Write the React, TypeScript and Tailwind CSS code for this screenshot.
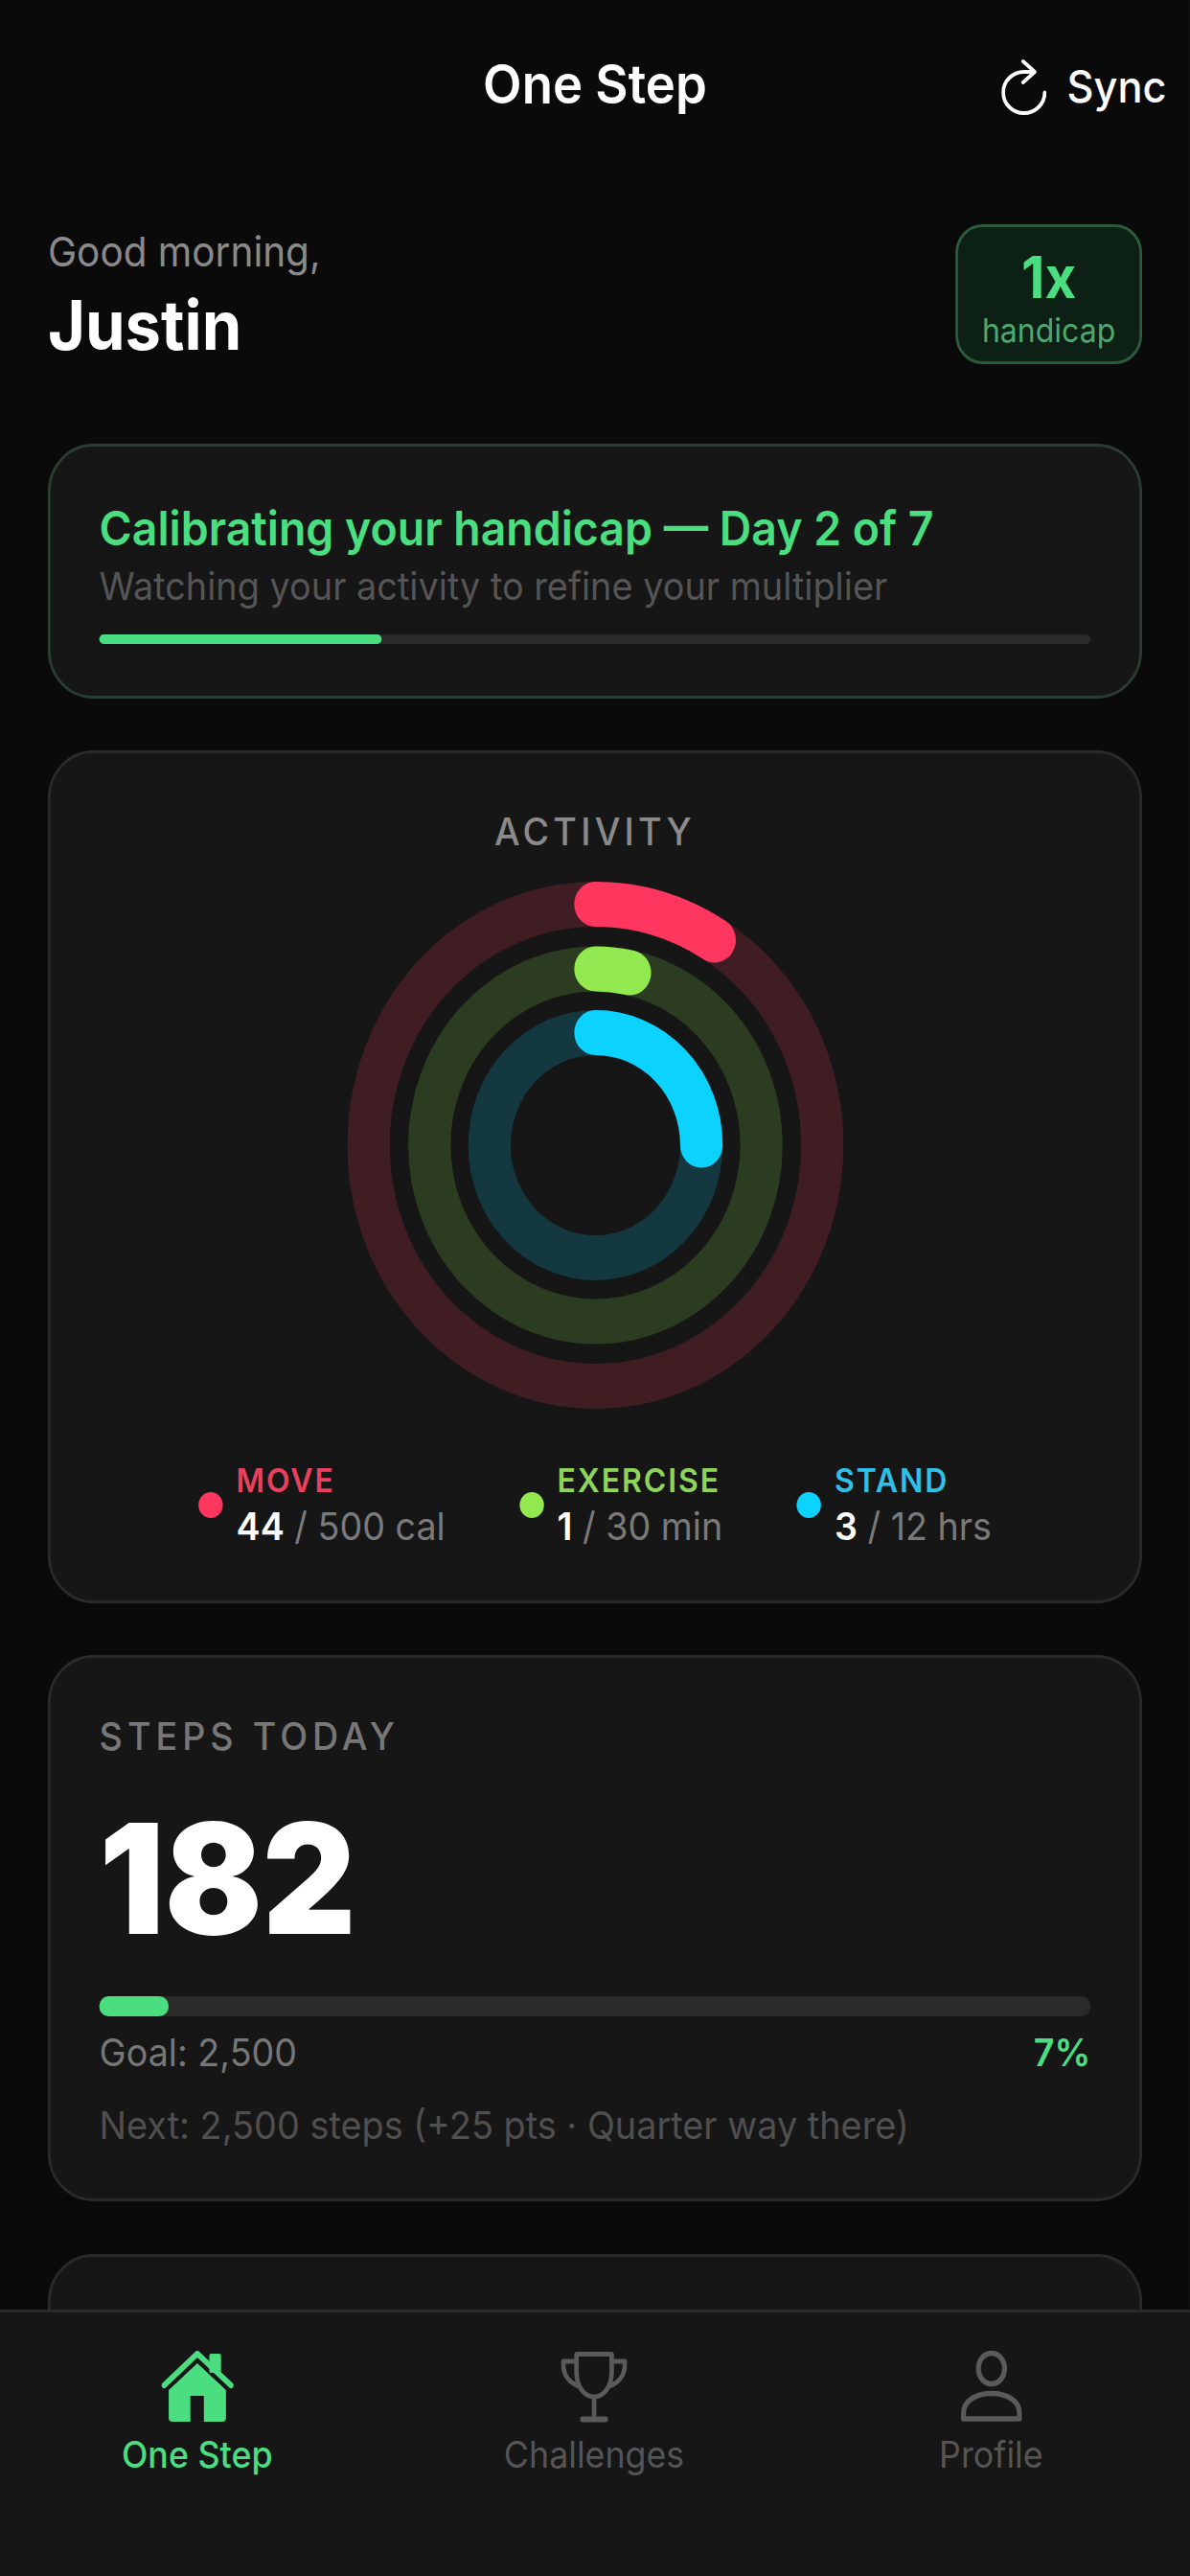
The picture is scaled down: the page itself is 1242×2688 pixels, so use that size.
const RINGS = [
  { r: 251.5, pct: 44 / 500, color: "#ff375f" },
  { r: 184, pct: 1 / 30, color: "#92e84f" },
  { r: 117.5, pct: 3 / 12, color: "#0cd2ff" },
];

const Card = ({ className, children }: { className: string; children?: React.ReactNode }) => (
  <div className={`mx-[53px] shrink-0 rounded-[50px] border-[3px] bg-[#161616] ${className}`}>{children}</div>
);

const Rings = () => (
  <svg width="550" height="550" viewBox="0 0 550 550" className="mx-auto mt-[29px] block">
    <g transform="rotate(-90 275 275)" fill="none" strokeWidth="47">
      {RINGS.map((ring) => {
        const len = 2 * Math.PI * ring.r;
        return (
          <g key={ring.color}>
            <circle cx="275" cy="275" r={ring.r} stroke={ring.color} strokeOpacity="0.18" />
            <circle
              cx="275"
              cy="275"
              r={ring.r}
              stroke={ring.color}
              strokeLinecap="round"
              strokeDasharray={`${len * ring.pct} ${len}`}
            />
          </g>
        );
      })}
    </g>
  </svg>
);

const Legend = ({ dot, label, labelClass, value, rest }: { dot: string; label: string; labelClass: string; value: string; rest: string }) => (
  <div className="flex items-center gap-[15px]">
    <div className={`h-[27px] w-[27px] rounded-full ${dot}`} />
    <div>
      <div className={`text-[34px] leading-[41px] font-semibold tracking-[2px] ${labelClass}`}>{label}</div>
      <div className="mt-[5px] text-[40px] leading-[46px] text-[#7a7a7a]">
        <span className="font-semibold text-white">{value}</span> / {rest}
      </div>
    </div>
  </div>
);

const SyncIcon = () => (
  <svg width="50" height="60" viewBox="0 0 50 60" fill="none" stroke="#fff" strokeWidth="4" strokeLinecap="round" strokeLinejoin="round">
    <path d="M36 14 H25 A23 21.500 0 1 0 48 35.500" />
    <path d="M24 3 L37 14 L24 25" />
  </svg>
);

const HomeIcon = () => (
  <svg width="80" height="76" viewBox="0 0 80 76" fill="#4ade80">
    <rect x="53" y="3" width="13" height="20" rx="2" />
    <path d="M3 36 L39.700 3 L77 36" fill="none" stroke="#4ade80" strokeWidth="6" strokeLinecap="round" strokeLinejoin="round" />
    <path d="M39.700 13 L71.500 41 V70 Q71.500 74 67.500 74 H47 V47 H32 V74 H12 Q8 74 8 70 V41 Z" />
  </svg>
);

const TrophyIcon = () => (
  <svg width="75" height="76" viewBox="0 0 75 76" fill="none" stroke="#5a5a5a" strokeWidth="5" strokeLinejoin="round">
    <path d="M18 3.500 H57 V22 C57 38 48 48 37.500 48 C27 48 18 38 18 22 Z" />
    <path d="M18 11 H3.500 V15 C3.500 25 10 33 20 37" />
    <path d="M57 11 H71.500 V15 C71.500 25 65 33 55 37" />
    <path d="M37.500 48 V72" />
    <path d="M25 71.500 H50" strokeWidth="6" strokeLinecap="round" />
  </svg>
);

const PersonIcon = () => (
  <svg width="68" height="76" viewBox="0 0 68 76" fill="none" stroke="#5a5a5a" strokeWidth="5.500">
    <ellipse cx="34" cy="18.500" rx="14.500" ry="16" />
    <path d="M3 65 C3 52 17 44.500 34 44.500 C51 44.500 65 52 65 65 V71 H3 Z" strokeLinejoin="round" />
  </svg>
);

const NavItem = ({ label, active, children }: { label: string; active?: boolean; children: React.ReactNode }) => (
  <div className="flex w-[257px] flex-col items-center">
    <div className="flex h-[76px] items-center">{children}</div>
    <div className={`mt-[10px] text-[38px] leading-[44px] ${active ? "font-medium text-[#4ade80]" : "text-[#555]"}`}>{label}</div>
  </div>
);

export default function App() {
  return (
    <div className="h-[2688px] w-[1242px] overflow-hidden">
      <div
        className="flex h-[2688px] w-[1319px] origin-top-left scale-x-[0.9416] flex-col overflow-hidden bg-[#0a0a0a] text-white"
        style={{ fontFamily: "Inter, sans-serif" }}
      >
        <div className="flex min-h-0 flex-1 flex-col overflow-hidden">
          {/* header */}
          <div className="relative flex h-[180px] shrink-0 items-center justify-center pb-[4px]">
            <div className="text-[56px] font-semibold">One Step</div>
            <div className="absolute right-[26px] top-[56px] flex items-center gap-[23px] text-[46px]">
              <SyncIcon />
              <span className="font-medium">Sync</span>
            </div>
          </div>

          {/* greeting */}
          <div className="mx-[53px] flex h-[200px] shrink-0 items-start justify-between pt-[54px]">
            <div className="mt-[3px]">
              <div className="text-[43px] leading-[50px] text-[#8a8a8a]">Good morning,</div>
              <div className="mt-[12px] text-[71px] leading-[80px] font-bold">Justin</div>
            </div>
            <div className="flex h-[146px] w-[207px] flex-col items-center rounded-[30px] border-[3px] border-[#2c5a3c] bg-[#0d2015] pt-[16px]">
              <div className="text-[60px] leading-[72px] font-bold text-[#4ade80]">1x</div>
              <div className="text-[34px] leading-[40px] text-[#4ea86f]">handicap</div>
            </div>
          </div>

          <div className="h-[83px] shrink-0" />

          {/* calibration */}
          <Card className="h-[266px] border-[#293d30] px-[54px] pt-[56px]">
            <div className="text-[49.300px] leading-[58px] font-semibold text-[#4ade80]">Calibrating your handicap — Day 2 of 7</div>
            <div className="mt-[9px] text-[40.200px] leading-[46px] text-[#555]">Watching your activity to refine your multiplier</div>
            <div className="mt-[27px] h-[10px] rounded-full bg-[#2a2a2a]">
              <div className="h-full w-[28.500%] rounded-full bg-[#4ade80]" />
            </div>
          </Card>

          {/* activity */}
          <Card className="mt-[54px] h-[890px] border-[#2a2a2a] pt-[59px]">
            <div className="text-center text-[40px] leading-[46px] font-medium tracking-[4.500px] text-[#8a8a8a]">ACTIVITY</div>
            <Rings />
            <div className="mt-[54px] flex justify-center gap-[82px]">
              <Legend dot="bg-[#ff375f]" label="MOVE" labelClass="text-[#e8405f]" value="44" rest="500 cal" />
              <Legend dot="bg-[#92e84f]" label="EXERCISE" labelClass="text-[#8fd45a]" value="1" rest="30 min" />
              <Legend dot="bg-[#0cd2ff]" label="STAND" labelClass="text-[#2fc0e8]" value="3" rest="12 hrs" />
            </div>
          </Card>

          {/* steps */}
          <Card className="mt-[54px] h-[570px] border-[#2a2a2a] px-[54px] pt-[59px]">
            <div className="text-[40px] leading-[46px] font-medium tracking-[5.300px] text-[#777]">STEPS TODAY</div>
            <div className="mt-[30px] text-[160px] leading-[190px] font-black">182</div>
            <div className="mt-[28px] h-[21px] rounded-full bg-[#2a2a2a]">
              <div className="h-full w-[7%] rounded-full bg-[#4ade80]" />
            </div>
            <div className="mt-[15px] flex justify-between text-[40px] leading-[46px]">
              <span className="text-[#777]">Goal: 2,500</span>
              <span className="font-semibold text-[#4ade80]">7%</span>
            </div>
            <div className="mt-[30px] text-[40.200px] leading-[46px] text-[#4f4f4f]">Next: 2,500 steps (+25 pts · Quarter way there)</div>
          </Card>

          <Card className="mt-[55px] h-[300px] border-[#2a2a2a]" />
        </div>

        {/* tab bar */}
        <div className="flex h-[278px] shrink-0 justify-between border-t-[3px] border-[#2a2a2a] bg-[#161616] pl-[90px] pr-[92px] pt-[40px]">
          <NavItem label="One Step" active>
            <HomeIcon />
          </NavItem>
          <NavItem label="Challenges">
            <TrophyIcon />
          </NavItem>
          <NavItem label="Profile">
            <PersonIcon />
          </NavItem>
        </div>
      </div>
    </div>
  );
}
